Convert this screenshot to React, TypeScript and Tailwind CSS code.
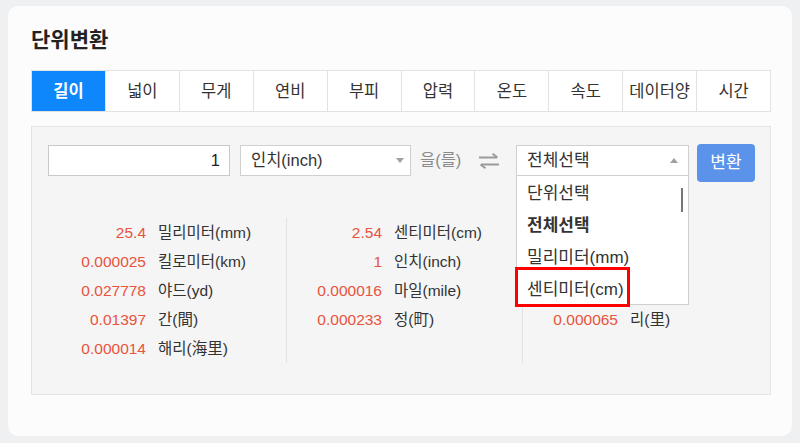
import React from "react";

const TABS = ["길이", "넓이", "무게", "연비", "부피", "압력", "온도", "속도", "데이터양", "시간"];

type Row = [string, string];

// the first three rows of the last column sit under the open list
const COLS: Row[][] = [
  [
    ["25.4", "밀리미터(mm)"],
    ["0.000025", "킬로미터(km)"],
    ["0.027778", "야드(yd)"],
    ["0.01397", "간(間)"],
    ["0.000014", "해리(海里)"],
  ],
  [
    ["2.54", "센티미터(cm)"],
    ["1", "인치(inch)"],
    ["0.000016", "마일(mile)"],
    ["0.000233", "정(町)"],
  ],
  [
    ["", ""],
    ["", ""],
    ["", ""],
    ["0.000065", "리(里)"],
  ],
];

const OPTIONS = ["단위선택", "전체선택", "밀리미터(mm)", "센티미터(cm)"];

function SwapIcon() {
  return (
    <svg width="22" height="16" viewBox="0 0 22 16" fill="none" stroke="#9a9a9a" strokeWidth="2">
      <path d="M1 4.5h18" />
      <path d="M14.5 0.8 19.5 4.5" />
      <path d="M21 11.5H3" />
      <path d="M7.5 15.2 2.5 11.5" />
    </svg>
  );
}

export default function App() {
  return (
    <div
      className="h-[443px] w-[800px] bg-[#eff0f2] px-2 pt-[6px]"
      style={{ fontFamily: '"Liberation Sans", "Noto Sans CJK KR", sans-serif' }}
    >
      <div className="h-[430px] rounded-[10px] bg-[#fcfcfc] pl-[23px] pr-[21px] pt-5">
        <h1 className="text-[21px] font-bold leading-[28px] text-[#222]">단위변환</h1>

        {/* tabs */}
        <div className="mt-4 flex h-[42px] border border-[#e2e2e2]">
          {TABS.map((t, i) => (
            <div
              key={t}
              className={
                "flex flex-1 items-center justify-center text-[16.5px] " +
                (i > 0 ? "border-l border-[#e2e2e2] " : "") +
                (i === 0 ? "bg-[#0d87fb] font-bold text-white" : "bg-white text-[#333]")
              }
            >
              {t}
            </div>
          ))}
        </div>

        {/* panel */}
        <div className="mt-[14px] h-[269px] border border-[#e4e4e4] bg-[#f5f5f5] pl-[16px] pt-[17px]">
          <div className="flex items-start">
            <input
              readOnly
              value="1"
              className="mt-px h-[31px] w-[182px] border border-[#c9c9c9] bg-white pr-[9px] text-right text-[16.5px] text-[#222] outline-none"
            />
            <div className="ml-[10px] mt-px flex h-[31px] w-[171px] items-center justify-between border border-[#d0d0d0] bg-white pl-[10px] pr-[5px] text-[16.5px] text-[#333]">
              <span>인치(inch)</span>
              <span className="mr-[1px] h-0 w-0 border-x-[4px] border-t-[5px] border-x-transparent border-t-[#a0a0a0]" />
            </div>
            <span className="ml-[9px] mt-px w-[48px] text-[16.5px] leading-[31px] text-[#8a8a8a]">을(를)</span>
            <span className="ml-[10px] mt-[9px]">
              <SwapIcon />
            </span>
            <div className="relative ml-[16px] mt-px w-[173px]">
              <div className="flex h-[31px] items-center justify-between border border-[#d0d0d0] bg-white pl-[10px] pr-[10px] text-[17px] text-[#333]">
                <span>전체선택</span>
                <span className="h-0 w-0 border-x-[4px] border-b-[5px] border-x-transparent border-b-[#a0a0a0]" />
              </div>
              {/* open list */}
              <div className="absolute left-0 top-[31px] z-10 h-[129px] w-[173px] border border-t-0 border-[#cfcfcf] bg-white pt-[2px]">
                {OPTIONS.map((o, i) => (
                  <div
                    key={o}
                    className={
                      "flex h-[32px] items-center pl-[10px] text-[17px] text-[#333] " +
                      (i === 1 ? "font-bold" : "")
                    }
                  >
                    {o}
                  </div>
                ))}
                <div className="absolute right-[5px] top-[12px] h-[24px] w-[2px] bg-[#777]" />
                <div className="absolute -left-[2px] top-[91px] h-[40px] w-[115px] border-[3px] border-[#ff0000]" />
              </div>
            </div>
            <button className="ml-[8px] h-[38px] w-[58px] rounded-[4px] bg-[#5b93ea] text-[17px] text-white">
              변환
            </button>
          </div>

          {/* results */}
          <div className="mt-[36px] flex pl-[3px]">
            {COLS.map((col, ci) => (
              <div key={ci} className={"w-[236px] " + (ci < 2 ? "border-r border-[#e2e2e2]" : "")}>
                {col.map(([n, name], ri) => (
                  <div key={ri} className="flex h-[29px] items-center text-[15.5px]">
                    <span className="w-[95px] text-right text-[#e8533c]">{n}</span>
                    <span className="ml-[12px] text-[#333]">{name}</span>
                  </div>
                ))}
              </div>
            ))}
          </div>
        </div>
      </div>
    </div>
  );
}
